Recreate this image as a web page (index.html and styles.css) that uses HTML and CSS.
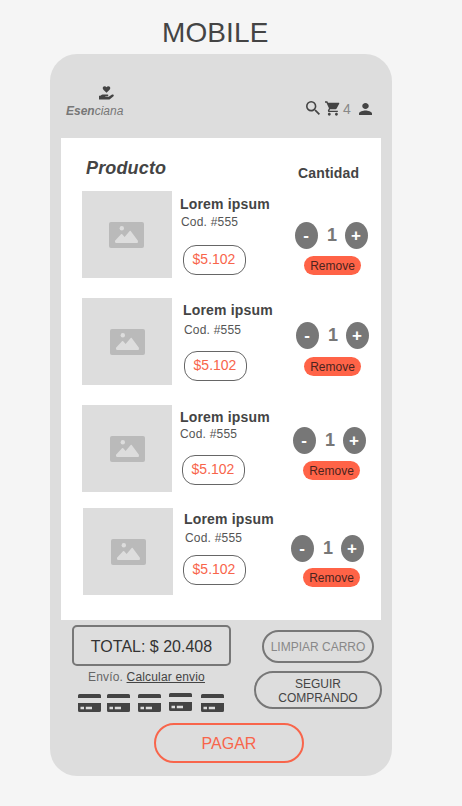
FILE: index.html
```html
<!DOCTYPE html>
<html lang="es">
<head>
<meta charset="utf-8">
<title>Esenciana</title>
<link rel="stylesheet" href="styles.css">
</head>
<body>
<svg class="defs" aria-hidden="true">
  <symbol id="image" viewBox="0 0 35 26"><path fill="#bababa" d="M2 0h31a2 2 0 0 1 2 2v22a2 2 0 0 1-2 2H2a2 2 0 0 1-2-2V2a2 2 0 0 1 2-2z"/><circle cx="12.8" cy="6.3" r="2.2" fill="#ddd"/><path fill="#ddd" d="M6 18.800l6-6.500q.6-.6 1.200 0l2.400 2.600 5.100-5.900q.5-.6 1 0l7.200 9.800q.5 2.100-.6 2.100H7q-1.500 0-1-2.100z"/></symbol>
  <symbol id="card" viewBox="0 0 23 18"><path d="M1.500 0h20A1.500 1.500 0 0 1 23 1.500V4H0V1.500A1.500 1.500 0 0 1 1.500 0zM0 9h23v7.500a1.500 1.500 0 0 1-1.500 1.500h-20A1.500 1.500 0 0 1 0 16.500z"/><path fill="#ddd" d="M2.500 12.700h3.500v2.600H2.500zM7.800 12.700h6.200v2.600H7.800z"/></symbol>
</svg>
<h1 class="title">MOBILE</h1>
<main class="phone">
  <header class="header">
    <div class="brand">
      <svg class="brand-icon" viewBox="0 0 15 14"><path d="M7.500 6.800L4.400 3.700C3 2.200 3.900.2 5.600.2c.9 0 1.500.4 1.900 1 .4-.6 1-1 1.900-1 1.700 0 2.600 2 1.200 3.500zM0 9.700h1.300c1-.9 2-1.200 3.200-1.200h4c1.200 0 1.200 1.700 0 1.700H6.300v.5h3.400l3-2c1.300-.7 2.700.4 1.800 1.500l-3.300 2.700c-.5.4-1 .6-1.700.6H0z"/></svg>
      <span class="brand-name"><b>Esen</b>ciana</span>
    </div>
    <nav class="tools">
      <svg class="search" viewBox="3 3 17.500 17.500"><path d="M15.500 14h-.79l-.28-.27A6.470 6.470 0 0 0 16 9.500 6.500 6.500 0 1 0 9.500 16c1.610 0 3.090-.59 4.230-1.570l.27.28v.79l5 4.990L20.490 19l-4.990-5zm-6 0C7.010 14 5 11.990 5 9.500S7.010 5 9.500 5 14 7.010 14 9.500 11.990 14 9.500 14z"/></svg>
      <svg class="cart" viewBox="1 2 21 20"><path d="M7 18c-1.100 0-1.990.9-1.990 2S5.900 22 7 22s2-.9 2-2-.9-2-2-2zM1 2v2h2l3.600 7.590-1.350 2.450C4.520 15.370 5.480 17 7 17h12v-2H7.420c-.14 0-.25-.11-.25-.25l.93-1.750h7.450c.75 0 1.410-.41 1.750-1.030l3.580-6.490C21.250 4.820 20.760 4 20 4H5.210l-.94-2H1zm16 16c-1.100 0-1.990.9-1.990 2s.89 2 1.990 2 2-.9 2-2-.9-2-2-2z"/></svg>
      <span class="count">4</span>
      <svg class="person" viewBox="4 4 16 16" preserveAspectRatio="none"><path d="M12 12c2.210 0 4-1.790 4-4s-1.790-4-4-4-4 1.790-4 4 1.790 4 4 4zm0 2c-2.670 0-8 1.340-8 4v2h16v-2c0-2.660-5.330-4-8-4z"/></svg>
    </nav>
  </header>

  <section class="panel">
    <div class="headings"><h2>Producto</h2><h3>Cantidad</h3></div>
    <article class="item item-a">
      <div class="thumb"><svg><use href="#image"/></svg></div>
      <div class="info"><h4>Lorem ipsum</h4><p>Cod. #555</p><div class="price">$5.102</div></div>
      <div class="qty"><div class="stepper"><button>-</button><b>1</b><button>+</button></div><button class="remove">Remove</button></div>
    </article>
    <article class="item item-b">
      <div class="thumb"><svg><use href="#image"/></svg></div>
      <div class="info"><h4>Lorem ipsum</h4><p>Cod. #555</p><div class="price">$5.102</div></div>
      <div class="qty"><div class="stepper"><button>-</button><b>1</b><button>+</button></div><button class="remove">Remove</button></div>
    </article>
    <article class="item item-c">
      <div class="thumb"><svg><use href="#image"/></svg></div>
      <div class="info"><h4>Lorem ipsum</h4><p>Cod. #555</p><div class="price">$5.102</div></div>
      <div class="qty"><div class="stepper"><button>-</button><b>1</b><button>+</button></div><button class="remove">Remove</button></div>
    </article>
    <article class="item item-d">
      <div class="thumb"><svg><use href="#image"/></svg></div>
      <div class="info"><h4>Lorem ipsum</h4><p>Cod. #555</p><div class="price">$5.102</div></div>
      <div class="qty"><div class="stepper"><button>-</button><b>1</b><button>+</button></div><button class="remove">Remove</button></div>
    </article>
  </section>

  <footer class="summary">
    <div class="totals">
      <div class="total">TOTAL: $ 20.408</div>
      <p class="shipping">Envío. <u>Calcular envio</u></p>
      <div class="cards">
        <svg><use href="#card"/></svg><svg><use href="#card"/></svg><svg><use href="#card"/></svg><svg class="raised"><use href="#card"/></svg><svg><use href="#card"/></svg>
      </div>
    </div>
    <div class="actions">
      <button class="clear">LIMPIAR CARRO</button>
      <button class="continue">SEGUIR<br>COMPRANDO</button>
    </div>
  </footer>
  <button class="pay">PAGAR</button>
</main>
</body>
</html>
```
FILE: styles.css
```css
* { box-sizing: border-box; margin: 0; padding: 0; }
body {
  width: 462px;
  height: 806px;
  background: #f5f5f5;
  color: #444;
  font-family: "Liberation Sans", Arial, sans-serif;
}
button { font: inherit; color: inherit; border: 0; background: none; display: block; white-space: nowrap; }
svg { display: block; fill: #444; }
.defs { width: 0; height: 0; }
.title { padding: 17px 0 0 162px; height: 54px; font-size: 28px; font-weight: 400; line-height: 32px; letter-spacing: .1px; }
.phone { width: 342px; height: 722px; margin-left: 50px; padding: 0 11px; border-radius: 27px; background: #ddd; }

.header { height: 84px; display: flex; justify-content: space-between; }
.brand { padding: 32px 0 0 5px; }
.brand-icon { width: 15px; height: 14px; margin-left: 33px; }
.brand-name { display: block; margin-top: 4px; font-size: 12px; line-height: 14px; font-style: italic; color: #777; }
.tools { display: flex; align-items: flex-start; padding: 47px 9px 0 0; }
.search { width: 14px; height: 14px; }
.cart { width: 15px; height: 15px; margin-left: 5px; }
.count { width: 8px; margin: 0 8px 0 3px; font-size: 14px; line-height: 16px; color: #888; }
.person { width: 13px; height: 12px; margin-top: 2px; }

.panel { height: 482px; padding-left: 21px; background: #fff; }
.headings { height: 53px; display: flex; }
h2 { width: 212px; padding: 20px 0 0 4px; font-size: 18px; line-height: 20px; font-style: italic; letter-spacing: .15px; }
h3 { padding-top: 27px; margin-left: 4px; font-size: 14px; line-height: 16px; letter-spacing: .15px; }
.item { display: flex; height: 87px; margin-bottom: 20px; }
.thumb { width: 90px; height: 87px; padding: 31px 0 0 28px; background: #ddd; flex: none; }
.thumb svg { width: 35px; height: 26px; }
.info { width: 120px; flex: none; }
h4 { font-size: 14px; line-height: 16px; letter-spacing: .17px; white-space: nowrap; }
.info p { font-size: 12px; line-height: 14px; letter-spacing: .2px; color: #555; }
.price { width: 63px; height: 30px; padding-right: 1px; border: 1px solid #666; border-radius: 13px; color: #f8654b; font-size: 14px; line-height: 26px; text-align: center; }
.qty { flex: none; }
.stepper { display: flex; width: 73px; height: 27px; justify-content: space-between; font-weight: 700; font-size: 18px; line-height: 27px; color: #777; }
.stepper b { padding-left: 1px; }
.stepper button { width: 23px; height: 27px; padding-right: 1px; border-radius: 50%; background: #777; color: #fff; font-size: 17px; line-height: 25px; }
.remove { width: 57px; height: 19px; border-radius: 10px; background: #ff6347; font-size: 12px; line-height: 20px; color: #4b241e; }

.item-a .thumb { padding-left: 27px; }
.item-a .info { padding: 5px 0 0 8px; }
.item-a p { margin: 3px 0 0 1px; }
.item-a .price { margin: 16px 0 0 3px; }
.item-a .qty { padding: 31px 0 0 3px; }
.item-a .remove { margin: 7px 0 0 9px; }

.item-b .info { padding: 4px 0 0 11px; }
.item-b p { margin: 5px 0 0 1px; }
.item-b .price { margin: 14px 0 0 1px; }
.item-b .qty { padding: 24px 0 0 4px; }
.item-b .remove { margin: 8px 0 0 8px; }

.item-c { margin-bottom: 16px; }
.item-c .info { padding: 4px 0 0 8px; }
.item-c p { margin-top: 2px; }
.item-c .price { margin: 14px 0 0 2px; }
.item-c .qty { padding: 22px 0 0 1px; }
.item-c .remove { margin: 7px 0 0 10px; }

.item-d { margin: 0 0 0 1px; }
.item-d .info { width: 118px; padding: 3px 0 0 11px; }
.item-d p { margin: 4px 0 0 1px; }
.item-d .price { margin: 10px 0 0 -1px; }
.item-d .qty { padding-top: 27px; }
.item-d .remove { margin: 6px 0 0 12px; }

.summary { height: 103px; display: flex; }
.totals { width: 182px; flex: none; padding: 5px 0 0 11px; }
.total { width: 159px; height: 41px; border: 2px solid #777; border-radius: 5px; text-align: center; font-size: 16px; line-height: 39px; color: #333; }
.shipping { margin: 4px 0 0 16px; font-size: 12px; line-height: 14px; letter-spacing: .17px; color: #666; }
.shipping u { color: #444; }
.cards { display: grid; grid-template-columns: 29px 31px 31px 32px 23px; margin: 10px 0 0 6px; }
.cards svg { width: 23px; height: 18px; }
.cards .raised { margin-top: -1px; }
.actions { flex: none; padding: 10px 0 0 11px; }
.clear { width: 112px; height: 33px; margin-left: 8px; border: 2px solid #777; border-radius: 17px; font-size: 12px; line-height: 31px; color: #888; }
.continue { width: 128px; height: 38px; margin-top: 8px; border: 2px solid #777; border-radius: 19px; font-size: 12px; line-height: 14px; padding-top: 1px; }
.pay { width: 150px; height: 40px; margin-left: 93px; border: 2px solid #f8654b; border-radius: 20px; color: #f8654b; font-size: 16px; line-height: 38px; }
```
